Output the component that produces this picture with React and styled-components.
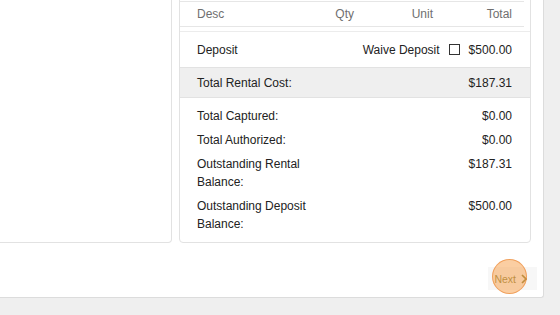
import React from "react";
import styled, { createGlobalStyle } from "styled-components";

const GlobalStyle = createGlobalStyle`
  html, body {
    margin: 0;
    padding: 0;
    background: #efefef;
    font-family: "Liberation Sans", Arial, sans-serif;
    font-size: 12px;
    color: #222;
    overflow: hidden;
  }
`;

const Panel = styled.div`
  box-sizing: border-box;
  width: 544px;
  height: 308px;
  margin-top: -10px;
  background: #fff;
  border-right: 1px solid #dcdcdc;
  border-bottom: 1px solid #dcdcdc;
  border-bottom-right-radius: 3px;
  padding-right: 12px;
  display: flex;
  flex-direction: column;
`;

const Cards = styled.div`
  display: grid;
  grid-template-columns: 172px 352px;
  column-gap: 7px;
  align-items: stretch;
`;

const Card = styled.div`
  box-sizing: border-box;
  background: #fff;
  border: 1px solid #e2e2e2;
  border-left: ${(p) => (p.$cut ? "none" : "1px solid #e2e2e2")};
  border-radius: ${(p) => (p.$cut ? "0 4px 4px 0" : "4px")};
  height: 253px;
`;

const Summary = styled(Card)`
  padding-top: 10px;
  display: flex;
  flex-direction: column;
`;

const HeadRow = styled.div`
  display: grid;
  grid-template-columns: 1fr 60px 79px 79px;
  align-items: center;
  height: 24px;
  margin-right: 6px;
  padding: 0 12px 0 17px;
  border-top: 1px solid #e6e6e6;
  border-bottom: 1px solid #e6e6e6;
  color: #6f6f6f;
`;

const HeadCell = styled.span`
  text-align: ${(p) => (p.$right ? "right" : "left")};
`;

const Row = styled.div`
  display: flex;
  align-items: center;
  justify-content: space-between;
  padding: 0 18px 0 17px;
  height: ${(p) => p.$h}px;
  background: ${(p) => (p.$shade ? "#efefef" : "#fff")};
  border-top: 1px solid ${(p) => (p.$shade ? "#e2e2e2" : "#ececec")};
  border-bottom: ${(p) => (p.$shade ? "1px solid #e2e2e2" : "none")};
`;

const Spacer = styled.div`
  height: 4px;
`;

const Waive = styled.div`
  display: flex;
  align-items: center;
  gap: 9px;
`;

const Check = styled.span`
  box-sizing: border-box;
  width: 11px;
  height: 11px;
  border: 1px solid #333;
  background: #fff;
`;

const Amount = styled.span`
  text-align: right;
`;

const Lines = styled.div`
  display: flex;
  flex-direction: column;
  gap: 6px;
  padding: 9px 18px 0 17px;
`;

const Line = styled.div`
  display: flex;
  justify-content: space-between;
  align-items: flex-start;
  line-height: 18px;
`;

const Label = styled.span`
  width: 120px;
`;

const Footer = styled.div`
  flex: 1;
  display: flex;
  justify-content: flex-end;
  align-items: flex-start;
  padding-top: 24px;
`;

const NextButton = styled.button`
  position: relative;
  display: flex;
  align-items: center;
  gap: 5px;
  height: 23px;
  padding: 0 10px 0 6px;
  margin-right: -6px;
  border: none;
  background: #f7f7f7;
  font-family: "Liberation Sans", Arial, sans-serif;
  font-size: 10.5px;
  color: #7a7428;
`;

const Chevron = styled.svg`
  width: 6px;
  height: 10px;
`;

const Highlight = styled.span`
  position: absolute;
  left: 4px;
  top: -8px;
  width: 35px;
  height: 35px;
  box-sizing: border-box;
  border-radius: 50%;
  background: rgba(248, 165, 85, 0.55);
  border: 1.5px solid rgba(236, 140, 60, 0.7);
  pointer-events: none;
`;

export default function App() {
  return (
    <>
      <GlobalStyle />
      <Panel>
        <Cards>
          <Card $cut />
          <Summary>
            <HeadRow>
              <HeadCell>Desc</HeadCell>
              <HeadCell $right>Qty</HeadCell>
              <HeadCell $right>Unit</HeadCell>
              <HeadCell $right>Total</HeadCell>
            </HeadRow>
            <Spacer />
            <Row $h={35}>
              <span>Deposit</span>
              <Waive>
                <span>Waive Deposit</span>
                <Check />
                <Amount>$500.00</Amount>
              </Waive>
            </Row>
            <Row $h={29} $shade>
              <span>Total Rental Cost:</span>
              <Amount>$187.31</Amount>
            </Row>
            <Lines>
              <Line>
                <Label>Total Captured:</Label>
                <Amount>$0.00</Amount>
              </Line>
              <Line>
                <Label>Total Authorized:</Label>
                <Amount>$0.00</Amount>
              </Line>
              <Line>
                <Label>Outstanding Rental Balance:</Label>
                <Amount>$187.31</Amount>
              </Line>
              <Line>
                <Label>Outstanding Deposit Balance:</Label>
                <Amount>$500.00</Amount>
              </Line>
            </Lines>
          </Summary>
        </Cards>
        <Footer>
          <NextButton>
            Next
            <Chevron viewBox="0 0 6 10">
              <path d="M1 1 L5 5 L1 9" fill="none" stroke="#7a7020" strokeWidth="1.7" />
            </Chevron>
            <Highlight />
          </NextButton>
        </Footer>
      </Panel>
    </>
  );
}
